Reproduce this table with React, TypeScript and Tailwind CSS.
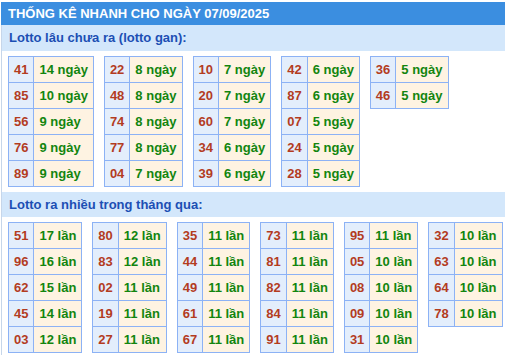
import React from "react";

type Item = { num: string; value: string };

const ganGroups: Item[][] = [
  [
    { num: "41", value: "14 ngày" },
    { num: "85", value: "10 ngày" },
    { num: "56", value: "9 ngày" },
    { num: "76", value: "9 ngày" },
    { num: "89", value: "9 ngày" },
  ],
  [
    { num: "22", value: "8 ngày" },
    { num: "48", value: "8 ngày" },
    { num: "74", value: "8 ngày" },
    { num: "77", value: "8 ngày" },
    { num: "04", value: "7 ngày" },
  ],
  [
    { num: "10", value: "7 ngày" },
    { num: "20", value: "7 ngày" },
    { num: "60", value: "7 ngày" },
    { num: "34", value: "6 ngày" },
    { num: "39", value: "6 ngày" },
  ],
  [
    { num: "42", value: "6 ngày" },
    { num: "87", value: "6 ngày" },
    { num: "07", value: "5 ngày" },
    { num: "24", value: "5 ngày" },
    { num: "28", value: "5 ngày" },
  ],
  [
    { num: "36", value: "5 ngày" },
    { num: "46", value: "5 ngày" },
  ],
];

const hotGroups: Item[][] = [
  [
    { num: "51", value: "17 lần" },
    { num: "96", value: "16 lần" },
    { num: "62", value: "15 lần" },
    { num: "45", value: "14 lần" },
    { num: "03", value: "12 lần" },
  ],
  [
    { num: "80", value: "12 lần" },
    { num: "83", value: "12 lần" },
    { num: "02", value: "11 lần" },
    { num: "19", value: "11 lần" },
    { num: "27", value: "11 lần" },
  ],
  [
    { num: "35", value: "11 lần" },
    { num: "44", value: "11 lần" },
    { num: "49", value: "11 lần" },
    { num: "61", value: "11 lần" },
    { num: "67", value: "11 lần" },
  ],
  [
    { num: "73", value: "11 lần" },
    { num: "81", value: "11 lần" },
    { num: "82", value: "11 lần" },
    { num: "84", value: "11 lần" },
    { num: "91", value: "11 lần" },
  ],
  [
    { num: "95", value: "11 lần" },
    { num: "05", value: "10 lần" },
    { num: "08", value: "10 lần" },
    { num: "09", value: "10 lần" },
    { num: "31", value: "10 lần" },
  ],
  [
    { num: "32", value: "10 lần" },
    { num: "63", value: "10 lần" },
    { num: "64", value: "10 lần" },
    { num: "78", value: "10 lần" },
  ],
];

const StatTable = ({ items }: { items: Item[] }) => (
  <div className="shrink-0 inline-grid grid-cols-[auto_auto] border-l border-t border-[#8cb2f5] whitespace-nowrap">
    {items.map((item) => (
      <React.Fragment key={item.num}>
        <div className="h-[26px] px-[5px] flex items-center justify-center bg-[#e3eefc] border-r border-b border-[#8cb2f5] text-[#b33c1f]">
          {item.num}
        </div>
        <div className="h-[26px] px-[5px] flex items-center bg-[#fef3e2] border-r border-b border-[#8cb2f5] text-[#12850f]">
          {item.value}
        </div>
      </React.Fragment>
    ))}
  </div>
);

const SectionTitle = ({ title, tall }: { title: string; tall?: boolean }) => (
  <div
    className={`${
      tall ? "h-[26px]" : "h-[25px]"
    } bg-[#d3e7fb] pl-[7px] flex items-center text-[13px] font-bold text-[#1c4fb4]`}
  >
    {title}
  </div>
);

export default function App() {
  return (
    <div
      className="w-[505px] h-[355px] bg-white pt-[2px] pl-px overflow-hidden"
      style={{ fontFamily: '"Liberation Sans", Arial, sans-serif' }}
    >
      <div className="border-l border-[#c6d6ea] h-full">
        <div className="-ml-px h-[23px] bg-[#3b8ee0] pl-[7px] flex items-center text-[13px] font-bold text-white">
          THỐNG KÊ NHANH CHO NGÀY 07/09/2025
        </div>
        <SectionTitle title="Lotto lâu chưa ra (lotto gan):" tall />
        <div className="flex items-start gap-x-[10px] pl-[6px] py-[5px] text-[13px] font-bold">
          {ganGroups.map((group, i) => (
            <StatTable key={i} items={group} />
          ))}
        </div>
        <SectionTitle title="Lotto ra nhiều trong tháng qua:" />
        <div className="flex items-start gap-x-[10px] pl-[6px] pt-[5px] text-[13px] font-bold">
          {hotGroups.map((group, i) => (
            <StatTable key={i} items={group} />
          ))}
        </div>
      </div>
    </div>
  );
}
